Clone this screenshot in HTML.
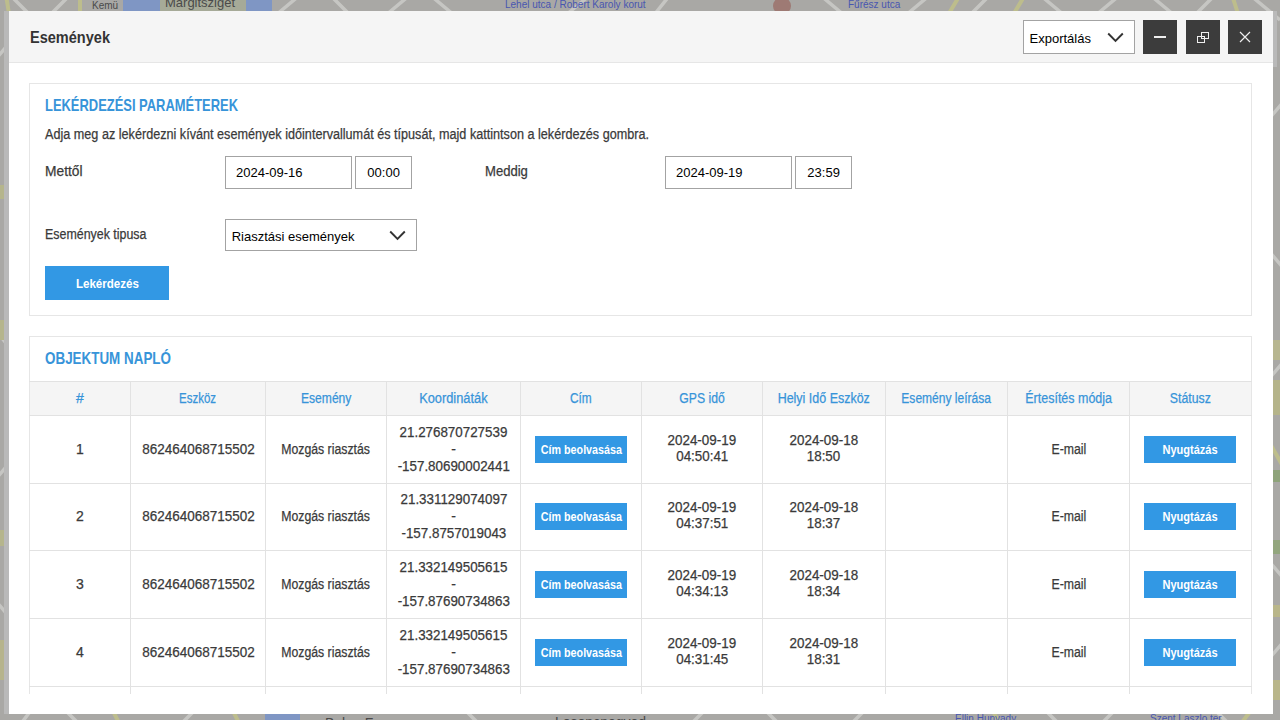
<!DOCTYPE html>
<html><head><meta charset="utf-8"><style>
html,body{margin:0;padding:0;width:1280px;height:720px;overflow:hidden;font-family:"Liberation Sans", sans-serif;}
body{background:#a7a7a3;position:relative}
.t{position:absolute;white-space:nowrap;display:inline-block;-webkit-text-stroke:0.25px currentColor}
.hl{position:absolute;left:29px;width:1223px;height:1px;background:#e2e2e2}
.vl{position:absolute;width:1px;background:#e2e2e2}
.bb{position:absolute;background:#3298e4}
.db{position:absolute;top:20px;width:34px;height:34px;background:#3c3c3c}
.inp{position:absolute;box-sizing:border-box;border:1px solid #a3a3a3;background:#fff}
</style></head><body>
<svg id="map" style="position:absolute;left:0;top:0" width="1280" height="720" viewBox="0 0 1280 720">
  <rect width="1280" height="720" fill="#a9a8a5"/>
  <g stroke="#c6c6c3" stroke-width="3.5" fill="none">
    <path d="M10 -5 L40 25 M45 20 L70 -5 M270 20 L300 -5 M330 -5 L350 15 M380 20 L410 -5 M430 -5 L460 20 M560 20 L590 -5 M650 20 L670 -5 M820 -5 L850 20 M900 20 L930 -5 M965 20 L990 -5 M1040 -5 L1070 20 M1090 20 L1120 -5 M1150 -5 L1180 20 M1190 20 L1215 -5 M1250 -5 L1280 20"/>
    <path d="M20 725 L35 705 M60 705 L80 725 M180 725 L200 705 M460 705 L480 725 M690 725 L710 705 M760 705 L780 725 M850 725 L870 705 M1040 705 L1060 725 M1100 725 L1120 705 M1210 705 L1230 725"/>
    <path d="M-5 60 L12 40 M-5 200 L12 180 M-5 330 L12 350 M-5 480 L12 460 M-5 600 L12 620"/>
    <path d="M1268 120 L1285 100 M1268 250 L1285 270 M1268 380 L1285 360 M1268 560 L1285 580 M1268 660 L1285 640"/>
  </g>
  <g stroke="#bdbd8c" stroke-width="4" fill="none">
    <path d="M6 -5 L10 20 M80 -5 L80 20 M1010 20 L1025 -5 M1232 -5 L1240 20 M945 20 L960 -5"/>
    <path d="M110 705 L120 725 M230 705 L240 725 M990 705 L1000 725 M1240 725 L1255 705"/>
    <path d="M1268 440 L1285 470"/>
  </g>
  <rect x="123" y="0" width="37" height="11" fill="#7f96c4"/>
  <rect x="160" y="0" width="86" height="11" fill="#a6aa98"/>
  <rect x="246" y="0" width="26" height="11" fill="#7f96c4"/>
  <rect x="265" y="714" width="35" height="6" fill="#7f96c4"/>
  <g font-family="Liberation Sans" font-size="13" fill="#4a4a4a">
    <text x="165" y="7">Margitsziget</text>
    <text x="92" y="9" font-size="10">Kemü</text>
    <text x="325" y="728" font-size="14">Belso-Ferencvaros</text>
    <text x="555" y="727" font-size="14">Losoncnegyed</text>
  </g>
  <g font-family="Liberation Sans" font-size="10" fill="#4856b0">
    <text x="505" y="8">Lehel utca / Robert Karoly korut</text>
    <text x="848" y="8">Fűrész utca</text>
    <text x="955" y="722">Ellin Hunyady</text>
    <text x="1150" y="722">Szent Laszlo ter</text>
  </g>
  <circle cx="782" cy="6" r="9" fill="#9e7a74"/>
  <rect x="1273" y="340" width="7" height="20" fill="#b7b690"/>
  <rect x="1273" y="380" width="7" height="35" fill="#b5b48a"/>
  <rect x="1273" y="470" width="7" height="12" fill="#8ea37a"/>
  <rect x="1273" y="540" width="7" height="14" fill="#93a67e"/>
  <rect x="1273" y="605" width="7" height="12" fill="#b9b68a"/>
  <rect x="1273" y="680" width="7" height="20" fill="#b9b68a"/>
  <rect x="0" y="185" width="4" height="14" fill="#b5b58c"/>
  <rect x="0" y="320" width="4" height="20" fill="#b5b58c"/>
  <rect x="0" y="530" width="4" height="16" fill="#b5b58c"/>
  <rect x="0" y="640" width="4" height="40" fill="#b6b48c"/>
  <rect x="4" y="11" width="5" height="703" fill="#b9b9b9"/>
  <rect x="1273" y="11" width="4" height="56" fill="#b9b9b9"/>
</svg>
<div id="modal" style="position:absolute;left:9px;top:11px;width:1264px;height:703px;background:#fff"></div>
<div style="position:absolute;left:9px;top:11px;width:1264px;height:51px;background:#f5f5f5"></div>
<div style="position:absolute;left:9px;top:62px;width:1264px;height:1px;background:#e6e6e6"></div>
<div class="inp" style="left:1023px;top:20px;width:112px;height:34px"></div>
<svg style="position:absolute;left:1107px;top:32px" width="17" height="11" viewBox="0 0 17 11"><path d="M1.2 1.5 L8.5 8.8 L15.8 1.5" fill="none" stroke="#333" stroke-width="1.9"/></svg>
<div class="db" style="left:1143px"><div style="position:absolute;left:11px;top:16px;width:12px;height:2px;background:#eee"></div></div>
<div class="db" style="left:1186px"><svg style="position:absolute;left:0;top:0" width="34" height="34"><rect x="15.5" y="12.5" width="7" height="6" fill="none" stroke="#eee" stroke-width="1"/><rect x="11.5" y="16.5" width="7" height="6" fill="none" stroke="#eee" stroke-width="1"/></svg></div>
<div class="db" style="left:1228px"><svg style="position:absolute;left:0;top:0" width="34" height="34"><path d="M12 12 L22 22 M22 12 L12 22" stroke="#eee" stroke-width="1.2"/></svg></div>

<div style="position:absolute;left:29px;top:83px;width:1221px;height:231px;border:1px solid #e6e6e6"></div>
<div class="inp" style="left:225px;top:156px;width:127px;height:33px"></div>
<div class="inp" style="left:355px;top:156px;width:57px;height:33px"></div>
<div class="inp" style="left:665px;top:156px;width:127px;height:33px"></div>
<div class="inp" style="left:795px;top:156px;width:57px;height:33px"></div>
<div class="inp" style="left:225px;top:219px;width:192px;height:32px"></div>
<svg style="position:absolute;left:389px;top:230px" width="17" height="11" viewBox="0 0 17 11"><path d="M1.2 1.5 L8.5 8.8 L15.8 1.5" fill="none" stroke="#333" stroke-width="1.9"/></svg>
<div class="bb" style="left:45px;top:266px;width:124px;height:34px"></div>

<div style="position:absolute;left:29px;top:336px;width:1221px;height:357px;border:1px solid #e6e6e6;border-bottom:none"></div>
<div style="position:absolute;left:30px;top:382px;width:1221px;height:33px;background:#f5f5f5"></div>
<div class="hl" style="top:381px"></div><div class="hl" style="top:415px"></div><div class="hl" style="top:483px"></div><div class="hl" style="top:550px"></div><div class="hl" style="top:618px"></div><div class="hl" style="top:686px"></div><div class="vl" style="left:130px;top:381px;height:313px"></div><div class="vl" style="left:265px;top:381px;height:313px"></div><div class="vl" style="left:386px;top:381px;height:313px"></div><div class="vl" style="left:520px;top:381px;height:313px"></div><div class="vl" style="left:641px;top:381px;height:313px"></div><div class="vl" style="left:762px;top:381px;height:313px"></div><div class="vl" style="left:885px;top:381px;height:313px"></div><div class="vl" style="left:1007px;top:381px;height:313px"></div><div class="vl" style="left:1129px;top:381px;height:313px"></div>
<div class="bb" style="left:535px;top:436px;width:92px;height:27px"></div><div class="bb" style="left:1144px;top:436px;width:92px;height:27px"></div><div class="bb" style="left:535px;top:503px;width:92px;height:27px"></div><div class="bb" style="left:1144px;top:503px;width:92px;height:27px"></div><div class="bb" style="left:535px;top:571px;width:92px;height:27px"></div><div class="bb" style="left:1144px;top:571px;width:92px;height:27px"></div><div class="bb" style="left:535px;top:639px;width:92px;height:27px"></div><div class="bb" style="left:1144px;top:639px;width:92px;height:27px"></div>
<span class="t" style="left:30.00px;top:29.03px;font-size:16.5px;line-height:16.5px;font-weight:700;color:#333;transform:scaleX(0.8808);transform-origin:left 0;-webkit-text-stroke:0;">Események</span>
<span class="t" style="left:1029.50px;top:31.60px;font-size:13px;line-height:13px;font-weight:400;color:#000;-webkit-text-stroke:0;">Exportálás</span>
<span class="t" style="left:45.00px;top:98.27px;font-size:15.75px;line-height:15.75px;font-weight:700;color:#3794d9;transform:scaleX(0.8209);transform-origin:left 0;-webkit-text-stroke:0;">LEKÉRDEZÉSI PARAMÉTEREK</span>
<span class="t" style="left:45.00px;top:127.15px;font-size:14px;line-height:14px;font-weight:400;color:#3a3a3a;transform:scaleX(0.9025);transform-origin:left 0;">Adja meg az lekérdezni kívánt események időintervallumát és típusát, majd kattintson a lekérdezés gombra.</span>
<span class="t" style="left:44.80px;top:164.05px;font-size:14px;line-height:14px;font-weight:400;color:#3a3a3a;transform:scaleX(0.9836);transform-origin:left 0;">Mettől</span>
<span class="t" style="left:236.00px;top:166.00px;font-size:13px;line-height:13px;font-weight:400;color:#000;-webkit-text-stroke:0;">2024-09-16</span>
<span class="t" style="left:367.33px;top:166.00px;font-size:13px;line-height:13px;font-weight:400;color:#000;-webkit-text-stroke:0;">00:00</span>
<span class="t" style="left:484.80px;top:164.05px;font-size:14px;line-height:14px;font-weight:400;color:#3a3a3a;transform:scaleX(0.9342);transform-origin:left 0;">Meddig</span>
<span class="t" style="left:676.00px;top:166.00px;font-size:13px;line-height:13px;font-weight:400;color:#000;-webkit-text-stroke:0;">2024-09-19</span>
<span class="t" style="left:807.33px;top:166.00px;font-size:13px;line-height:13px;font-weight:400;color:#000;-webkit-text-stroke:0;">23:59</span>
<span class="t" style="left:45.00px;top:227.05px;font-size:14px;line-height:14px;font-weight:400;color:#3a3a3a;transform:scaleX(0.8872);transform-origin:left 0;">Események tipusa</span>
<span class="t" style="left:231.70px;top:229.80px;font-size:13px;line-height:13px;font-weight:400;color:#000;-webkit-text-stroke:0;">Riasztási események</span>
<span class="t" style="left:71.59px;top:277.00px;font-size:13px;line-height:13px;font-weight:700;color:#fff;transform:scaleX(0.8895);transform-origin:center 0;-webkit-text-stroke:0;">Lekérdezés</span>
<span class="t" style="left:45.40px;top:351.07px;font-size:15.75px;line-height:15.75px;font-weight:700;color:#3794d9;transform:scaleX(0.8520);transform-origin:left 0;-webkit-text-stroke:0;">OBJEKTUM NAPLÓ</span>
<span class="t" style="left:76.10px;top:391.15px;font-size:14px;line-height:14px;font-weight:400;color:#3794d9;">#</span>
<span class="t" style="left:175.44px;top:391.15px;font-size:14px;line-height:14px;font-weight:400;color:#3794d9;transform:scaleX(0.8199);transform-origin:center 0;">Eszköz</span>
<span class="t" style="left:296.82px;top:391.15px;font-size:14px;line-height:14px;font-weight:400;color:#3794d9;transform:scaleX(0.8636);transform-origin:center 0;">Esemény</span>
<span class="t" style="left:416.14px;top:391.15px;font-size:14px;line-height:14px;font-weight:400;color:#3794d9;transform:scaleX(0.9154);transform-origin:center 0;">Koordináták</span>
<span class="t" style="left:568.16px;top:391.15px;font-size:14px;line-height:14px;font-weight:400;color:#3794d9;transform:scaleX(0.8453);transform-origin:center 0;">Cím</span>
<span class="t" style="left:675.93px;top:391.15px;font-size:14px;line-height:14px;font-weight:400;color:#3794d9;transform:scaleX(0.8707);transform-origin:center 0;">GPS idő</span>
<span class="t" style="left:772.26px;top:391.15px;font-size:14px;line-height:14px;font-weight:400;color:#3794d9;transform:scaleX(0.8910);transform-origin:center 0;">Helyi Idő Eszköz</span>
<span class="t" style="left:894.36px;top:391.15px;font-size:14px;line-height:14px;font-weight:400;color:#3794d9;transform:scaleX(0.8592);transform-origin:center 0;">Esemény leírása</span>
<span class="t" style="left:1019.87px;top:391.15px;font-size:14px;line-height:14px;font-weight:400;color:#3794d9;transform:scaleX(0.8914);transform-origin:center 0;">Értesítés módja</span>
<span class="t" style="left:1167.15px;top:391.15px;font-size:14px;line-height:14px;font-weight:400;color:#3794d9;transform:scaleX(0.8779);transform-origin:center 0;">Státusz</span>
<span class="t" style="left:76.10px;top:441.70px;font-size:14px;line-height:14px;font-weight:400;color:#3a3a3a;">1</span>
<span class="t" style="left:139.60px;top:441.70px;font-size:14px;line-height:14px;font-weight:400;color:#3a3a3a;transform:scaleX(0.9632);transform-origin:center 0;">862464068715502</span>
<span class="t" style="left:275.42px;top:441.70px;font-size:14px;line-height:14px;font-weight:400;color:#3a3a3a;transform:scaleX(0.8769);transform-origin:center 0;">Mozgás riasztás</span>
<span class="t" style="left:397.05px;top:424.70px;font-size:14px;line-height:14px;font-weight:400;color:#3a3a3a;transform:scaleX(0.9550);transform-origin:center 0;">21.276870727539</span>
<span class="t" style="left:451.16px;top:441.70px;font-size:14px;line-height:14px;font-weight:400;color:#3a3a3a;">-</span>
<span class="t" style="left:394.72px;top:458.75px;font-size:14px;line-height:14px;font-weight:400;color:#3a3a3a;transform:scaleX(0.9550);transform-origin:center 0;">-157.80690002441</span>
<span class="t" style="left:666.19px;top:432.75px;font-size:14px;line-height:14px;font-weight:400;color:#3a3a3a;transform:scaleX(0.9578);transform-origin:center 0;">2024-09-19</span>
<span class="t" style="left:674.75px;top:449.35px;font-size:14px;line-height:14px;font-weight:400;color:#3a3a3a;transform:scaleX(0.9550);transform-origin:center 0;">04:50:41</span>
<span class="t" style="left:788.19px;top:432.75px;font-size:14px;line-height:14px;font-weight:400;color:#3a3a3a;transform:scaleX(0.9578);transform-origin:center 0;">2024-09-18</span>
<span class="t" style="left:806.48px;top:449.35px;font-size:14px;line-height:14px;font-weight:400;color:#3a3a3a;transform:scaleX(0.9550);transform-origin:center 0;">18:50</span>
<span class="t" style="left:1048.66px;top:441.70px;font-size:14px;line-height:14px;font-weight:400;color:#3a3a3a;transform:scaleX(0.8772);transform-origin:center 0;">E-mail</span>
<span class="t" style="left:535.64px;top:444.44px;font-size:12px;line-height:12px;font-weight:700;color:#fff;transform:scaleX(0.8929);transform-origin:center 0;-webkit-text-stroke:0;">Cím beolvasása</span>
<span class="t" style="left:1159.98px;top:444.44px;font-size:12px;line-height:12px;font-weight:700;color:#fff;transform:scaleX(0.9195);transform-origin:center 0;-webkit-text-stroke:0;">Nyugtázás</span>
<span class="t" style="left:76.10px;top:508.70px;font-size:14px;line-height:14px;font-weight:400;color:#3a3a3a;">2</span>
<span class="t" style="left:139.60px;top:508.70px;font-size:14px;line-height:14px;font-weight:400;color:#3a3a3a;transform:scaleX(0.9632);transform-origin:center 0;">862464068715502</span>
<span class="t" style="left:275.42px;top:508.70px;font-size:14px;line-height:14px;font-weight:400;color:#3a3a3a;transform:scaleX(0.8769);transform-origin:center 0;">Mozgás riasztás</span>
<span class="t" style="left:397.57px;top:491.70px;font-size:14px;line-height:14px;font-weight:400;color:#3a3a3a;transform:scaleX(0.9550);transform-origin:center 0;">21.331129074097</span>
<span class="t" style="left:451.16px;top:508.70px;font-size:14px;line-height:14px;font-weight:400;color:#3a3a3a;">-</span>
<span class="t" style="left:398.61px;top:525.75px;font-size:14px;line-height:14px;font-weight:400;color:#3a3a3a;transform:scaleX(0.9550);transform-origin:center 0;">-157.8757019043</span>
<span class="t" style="left:666.19px;top:499.75px;font-size:14px;line-height:14px;font-weight:400;color:#3a3a3a;transform:scaleX(0.9578);transform-origin:center 0;">2024-09-19</span>
<span class="t" style="left:674.75px;top:516.35px;font-size:14px;line-height:14px;font-weight:400;color:#3a3a3a;transform:scaleX(0.9550);transform-origin:center 0;">04:37:51</span>
<span class="t" style="left:788.19px;top:499.75px;font-size:14px;line-height:14px;font-weight:400;color:#3a3a3a;transform:scaleX(0.9578);transform-origin:center 0;">2024-09-18</span>
<span class="t" style="left:806.48px;top:516.35px;font-size:14px;line-height:14px;font-weight:400;color:#3a3a3a;transform:scaleX(0.9550);transform-origin:center 0;">18:37</span>
<span class="t" style="left:1048.66px;top:508.70px;font-size:14px;line-height:14px;font-weight:400;color:#3a3a3a;transform:scaleX(0.8772);transform-origin:center 0;">E-mail</span>
<span class="t" style="left:535.64px;top:511.44px;font-size:12px;line-height:12px;font-weight:700;color:#fff;transform:scaleX(0.8929);transform-origin:center 0;-webkit-text-stroke:0;">Cím beolvasása</span>
<span class="t" style="left:1159.98px;top:511.44px;font-size:12px;line-height:12px;font-weight:700;color:#fff;transform:scaleX(0.9195);transform-origin:center 0;-webkit-text-stroke:0;">Nyugtázás</span>
<span class="t" style="left:76.10px;top:576.70px;font-size:14px;line-height:14px;font-weight:400;color:#3a3a3a;">3</span>
<span class="t" style="left:139.60px;top:576.70px;font-size:14px;line-height:14px;font-weight:400;color:#3a3a3a;transform:scaleX(0.9632);transform-origin:center 0;">862464068715502</span>
<span class="t" style="left:275.42px;top:576.70px;font-size:14px;line-height:14px;font-weight:400;color:#3a3a3a;transform:scaleX(0.8769);transform-origin:center 0;">Mozgás riasztás</span>
<span class="t" style="left:397.05px;top:559.70px;font-size:14px;line-height:14px;font-weight:400;color:#3a3a3a;transform:scaleX(0.9550);transform-origin:center 0;">21.332149505615</span>
<span class="t" style="left:451.16px;top:576.70px;font-size:14px;line-height:14px;font-weight:400;color:#3a3a3a;">-</span>
<span class="t" style="left:394.72px;top:593.75px;font-size:14px;line-height:14px;font-weight:400;color:#3a3a3a;transform:scaleX(0.9550);transform-origin:center 0;">-157.87690734863</span>
<span class="t" style="left:666.19px;top:567.75px;font-size:14px;line-height:14px;font-weight:400;color:#3a3a3a;transform:scaleX(0.9578);transform-origin:center 0;">2024-09-19</span>
<span class="t" style="left:674.75px;top:584.35px;font-size:14px;line-height:14px;font-weight:400;color:#3a3a3a;transform:scaleX(0.9550);transform-origin:center 0;">04:34:13</span>
<span class="t" style="left:788.19px;top:567.75px;font-size:14px;line-height:14px;font-weight:400;color:#3a3a3a;transform:scaleX(0.9578);transform-origin:center 0;">2024-09-18</span>
<span class="t" style="left:806.48px;top:584.35px;font-size:14px;line-height:14px;font-weight:400;color:#3a3a3a;transform:scaleX(0.9550);transform-origin:center 0;">18:34</span>
<span class="t" style="left:1048.66px;top:576.70px;font-size:14px;line-height:14px;font-weight:400;color:#3a3a3a;transform:scaleX(0.8772);transform-origin:center 0;">E-mail</span>
<span class="t" style="left:535.64px;top:579.44px;font-size:12px;line-height:12px;font-weight:700;color:#fff;transform:scaleX(0.8929);transform-origin:center 0;-webkit-text-stroke:0;">Cím beolvasása</span>
<span class="t" style="left:1159.98px;top:579.44px;font-size:12px;line-height:12px;font-weight:700;color:#fff;transform:scaleX(0.9195);transform-origin:center 0;-webkit-text-stroke:0;">Nyugtázás</span>
<span class="t" style="left:76.10px;top:644.70px;font-size:14px;line-height:14px;font-weight:400;color:#3a3a3a;">4</span>
<span class="t" style="left:139.60px;top:644.70px;font-size:14px;line-height:14px;font-weight:400;color:#3a3a3a;transform:scaleX(0.9632);transform-origin:center 0;">862464068715502</span>
<span class="t" style="left:275.42px;top:644.70px;font-size:14px;line-height:14px;font-weight:400;color:#3a3a3a;transform:scaleX(0.8769);transform-origin:center 0;">Mozgás riasztás</span>
<span class="t" style="left:397.05px;top:627.70px;font-size:14px;line-height:14px;font-weight:400;color:#3a3a3a;transform:scaleX(0.9550);transform-origin:center 0;">21.332149505615</span>
<span class="t" style="left:451.16px;top:644.70px;font-size:14px;line-height:14px;font-weight:400;color:#3a3a3a;">-</span>
<span class="t" style="left:394.72px;top:661.75px;font-size:14px;line-height:14px;font-weight:400;color:#3a3a3a;transform:scaleX(0.9550);transform-origin:center 0;">-157.87690734863</span>
<span class="t" style="left:666.19px;top:635.75px;font-size:14px;line-height:14px;font-weight:400;color:#3a3a3a;transform:scaleX(0.9578);transform-origin:center 0;">2024-09-19</span>
<span class="t" style="left:674.75px;top:652.35px;font-size:14px;line-height:14px;font-weight:400;color:#3a3a3a;transform:scaleX(0.9550);transform-origin:center 0;">04:31:45</span>
<span class="t" style="left:788.19px;top:635.75px;font-size:14px;line-height:14px;font-weight:400;color:#3a3a3a;transform:scaleX(0.9578);transform-origin:center 0;">2024-09-18</span>
<span class="t" style="left:806.48px;top:652.35px;font-size:14px;line-height:14px;font-weight:400;color:#3a3a3a;transform:scaleX(0.9550);transform-origin:center 0;">18:31</span>
<span class="t" style="left:1048.66px;top:644.70px;font-size:14px;line-height:14px;font-weight:400;color:#3a3a3a;transform:scaleX(0.8772);transform-origin:center 0;">E-mail</span>
<span class="t" style="left:535.64px;top:647.44px;font-size:12px;line-height:12px;font-weight:700;color:#fff;transform:scaleX(0.8929);transform-origin:center 0;-webkit-text-stroke:0;">Cím beolvasása</span>
<span class="t" style="left:1159.98px;top:647.44px;font-size:12px;line-height:12px;font-weight:700;color:#fff;transform:scaleX(0.9195);transform-origin:center 0;-webkit-text-stroke:0;">Nyugtázás</span>
<div style="position:absolute;left:9px;top:694px;width:1264px;height:20px;background:#fff"></div>
</body></html>
